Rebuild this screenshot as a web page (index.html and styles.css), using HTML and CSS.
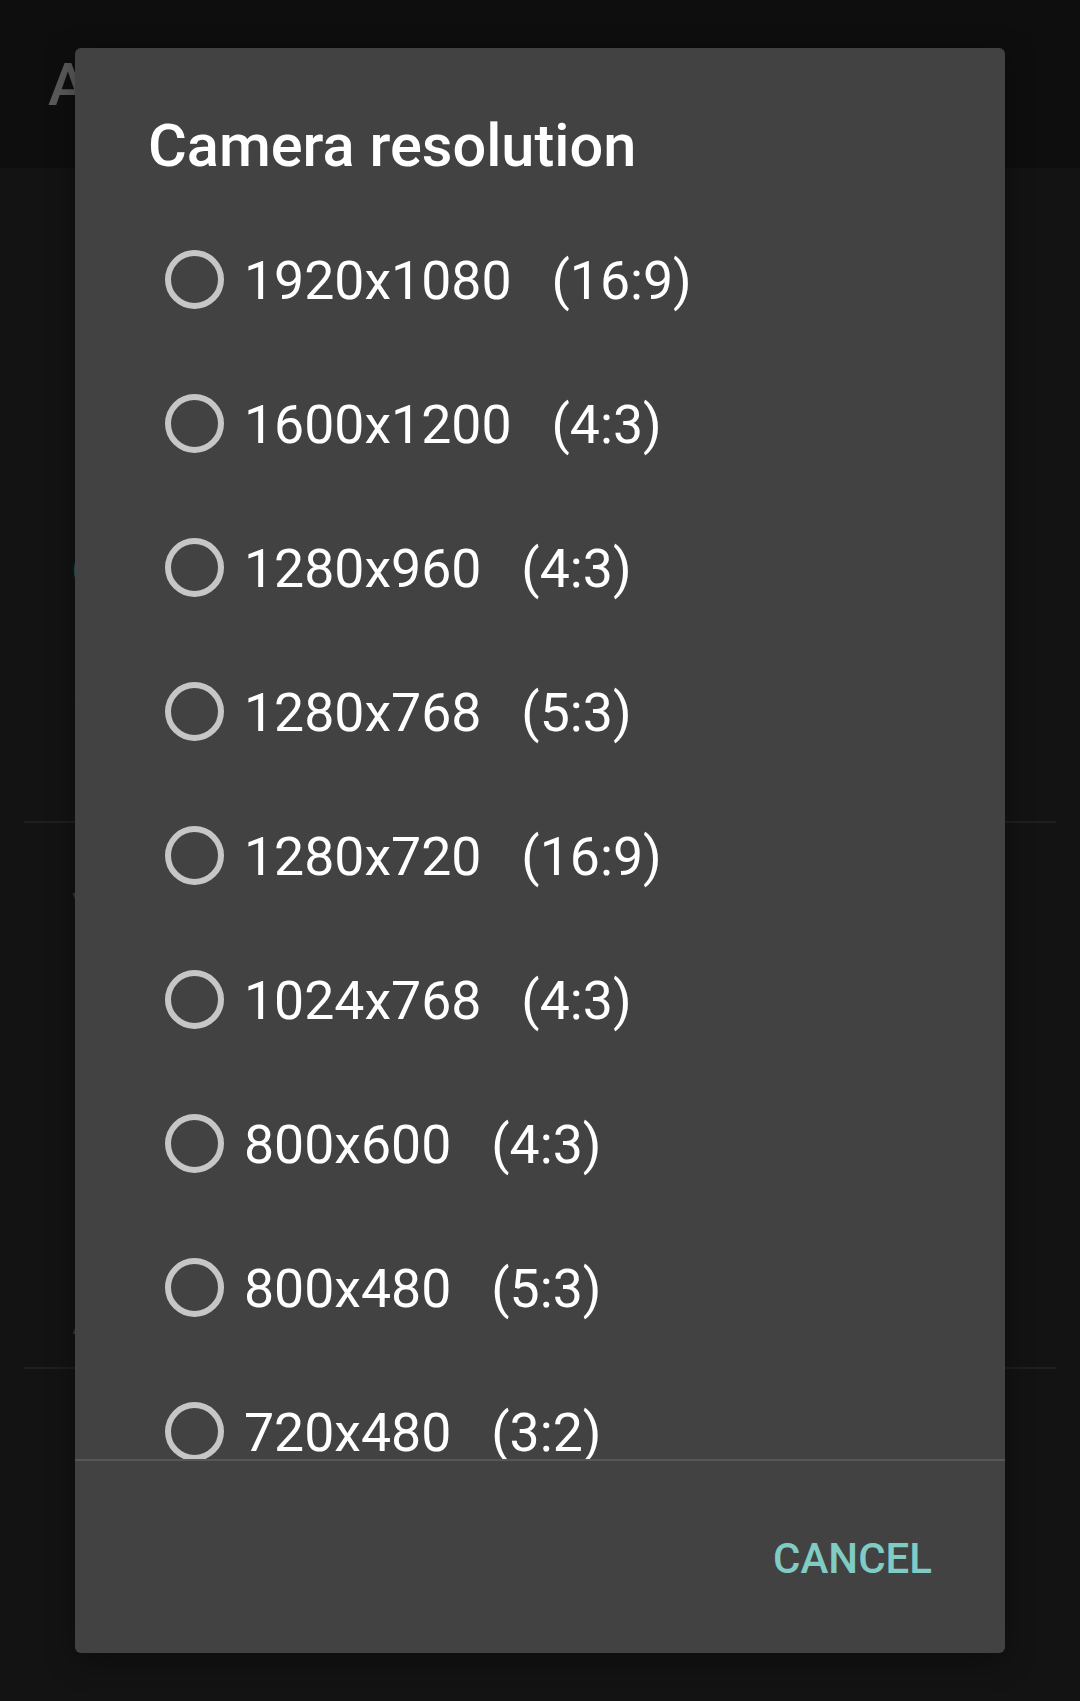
FILE: index.html
```html
<!DOCTYPE html>
<html>
<head>
<meta charset="utf-8">
<link rel="stylesheet" href="styles.css">
</head>
<body>
<div class="screen">
  <header class="appbar"><span class="appbar-title">Advanced settings</span></header>
  <main class="bg">
    <div class="bg-section">
      <div class="bg-cat">Camera</div>
      <div class="bg-item">
        <div class="bg-title">Camera resolution</div>
        <div class="bg-sum">1920x1080</div>
      </div>
    </div>
    <div class="bg-section second">
      <div class="bg-item">
        <div class="bg-title">Video quality</div>
        <div class="bg-sum">High</div>
      </div>
      <div class="bg-item low">
        <div class="bg-title">Audio</div>
      </div>
    </div>
  </main>

  <div class="dialog">
    <h1 class="dlg-title">Camera resolution</h1>
    <div class="dlg-list">
      <div class="row"><span class="radio"></span><span class="label">1920x1080   (16:9)</span></div>
      <div class="row"><span class="radio"></span><span class="label">1600x1200   (4:3)</span></div>
      <div class="row"><span class="radio"></span><span class="label">1280x960   (4:3)</span></div>
      <div class="row"><span class="radio"></span><span class="label">1280x768   (5:3)</span></div>
      <div class="row"><span class="radio"></span><span class="label">1280x720   (16:9)</span></div>
      <div class="row"><span class="radio"></span><span class="label">1024x768   (4:3)</span></div>
      <div class="row"><span class="radio"></span><span class="label">800x600   (4:3)</span></div>
      <div class="row"><span class="radio"></span><span class="label">800x480   (5:3)</span></div>
      <div class="row"><span class="radio"></span><span class="label">720x480   (3:2)</span></div>
    </div>
    <div class="dlg-divider"></div>
    <div class="dlg-actions"><span class="btn">CANCEL</span></div>
  </div>
</div>
</body>
</html>
```
FILE: styles.css
```css
html, body {
  margin: 0;
  padding: 0;
  background: #131313;
}
.screen {
  position: relative;
  width: 1080px;
  height: 1701px;
  overflow: hidden;
  font-family: Roboto, "Noto Sans", sans-serif;
  background: #131313;
}
.appbar {
  height: 168px;
  background: #0e0e0e;
  display: flex;
  align-items: center;
  padding-left: 48px;
  box-sizing: border-box;
}
.appbar-title {
  font-size: 60px;
  font-weight: 500;
  color: #5a5a5a;
  white-space: nowrap;
}
.bg {
  padding: 0 24px;
}
.bg-section {
  border-bottom: 2px solid #1f1f1f;
  padding-left: 48px;
  height: 655px;
  box-sizing: border-box;
  padding-top: 380px;
}
.bg-section.second {
  height: 546px;
  padding-top: 60px;
}
.bg-cat {
  color: #2a5450;
  font-size: 40px;
  font-weight: 500;
  margin-bottom: 80px;
}
.bg-title {
  color: #3a3a3a;
  font-size: 50px;
}
.bg-sum {
  color: #2e2e2e;
  font-size: 40px;
}
.bg-item.low {
  margin-top: 300px;
}
.dialog {
  position: absolute;
  left: 75px;
  top: 48px;
  width: 930px;
  height: 1605px;
  background: #424242;
  border-radius: 6px;
  display: flex;
  flex-direction: column;
  box-shadow: 0 8px 30px rgba(0,0,0,0.35);
}
.dlg-title {
  margin: 0;
  padding: 62px 0 0 73px;
  font-size: 59.5px;
  line-height: 72px;
  font-weight: 500;
  color: #ffffff;
}
.dlg-list {
  margin-top: 25px;
  height: 1252px;
  overflow: hidden;
  flex: none;
}
.row {
  height: 144px;
  display: flex;
  align-items: center;
  padding-left: 90px;
}
.radio {
  width: 47px;
  height: 47px;
  border: 6px solid #c6c6c6;
  border-radius: 50%;
  flex: none;
}
.label {
  margin-left: 20px;
  padding-top: 3px;
  font-size: 53.6px;
  color: #ffffff;
  white-space: pre;
}
.dlg-divider {
  height: 2px;
  background: #575757;
  flex: none;
}
.dlg-actions {
  flex: 1;
  display: flex;
  align-items: center;
  justify-content: flex-end;
  padding-right: 73px;
}
.btn {
  color: #80cbc4;
  font-size: 42px;
  font-weight: 500;
  padding-top: 2px;
}
```
